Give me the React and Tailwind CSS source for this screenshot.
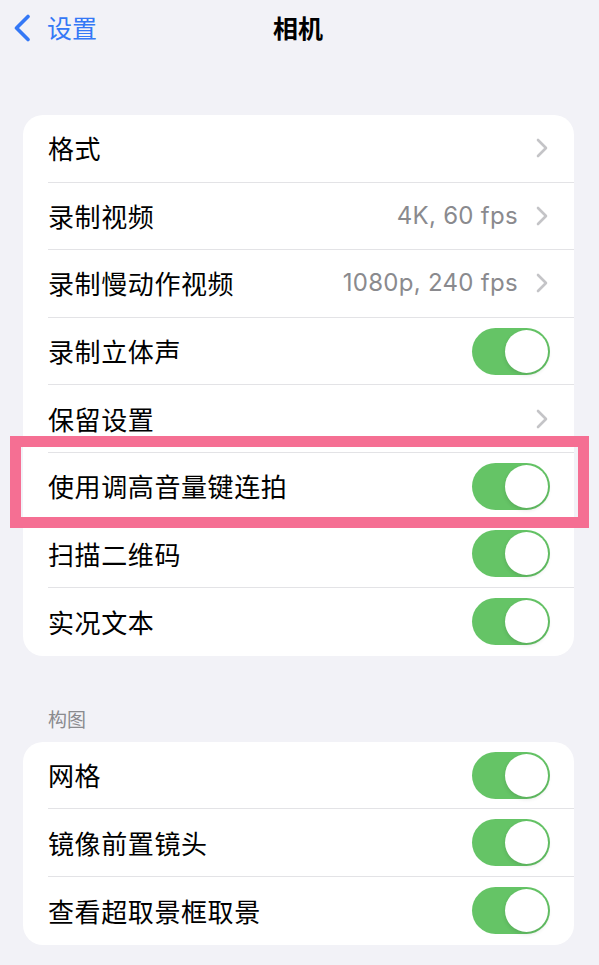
import React from 'react';

const font = {
  fontFamily: '"Noto Sans CJK SC", "Noto Sans", "Liberation Sans", sans-serif',
};

const latin = {
  fontFamily: 'Inter, "Liberation Sans", sans-serif',
};

function Chevron() {
  return (
    <svg width="12" height="20" viewBox="0 0 12 20" fill="none" className="shrink-0">
      <path d="M2 2l8 8-8 8" stroke="#c4c4c7" strokeWidth="2.6" strokeLinecap="round" strokeLinejoin="round" />
    </svg>
  );
}

function Toggle() {
  return (
    <div className="w-[78px] h-[47px] rounded-full bg-[#65c466] relative shrink-0">
      <div className="absolute right-[2px] top-[2px] w-[43px] h-[43px] rounded-full bg-white shadow-[0_2px_4px_rgba(0,0,0,0.12)]" />
    </div>
  );
}

function Row({ label, value, kind, last }) {
  return (
    <div className="h-[67.6px] pl-[25px] flex">
      <div
        className={
          'flex-1 flex items-center justify-between ' +
          (kind === 'toggle' ? 'pr-[24px] ' : 'pr-[26px] ') +
          (last ? '' : 'border-b border-[#e3e3e6]')
        }
      >
        <span className="text-[26px] text-black leading-none tracking-[0.6px]">{label}</span>
        {kind === 'toggle' ? (
          <Toggle />
        ) : (
          <div className="flex items-center gap-[18px]">
            {value && (
              <span className="text-[24px] text-[#8a8a8e] leading-none tracking-[0.3px]" style={latin}>
                {value}
              </span>
            )}
            <Chevron />
          </div>
        )}
      </div>
    </div>
  );
}

const mainRows = [
  { label: '格式', kind: 'link' },
  { label: '录制视频', value: '4K, 60 fps', kind: 'link' },
  { label: '录制慢动作视频', value: '1080p, 240 fps', kind: 'link' },
  { label: '录制立体声', kind: 'toggle' },
  { label: '保留设置', kind: 'link' },
  { label: '使用调高音量键连拍', kind: 'toggle' },
  { label: '扫描二维码', kind: 'toggle' },
  { label: '实况文本', kind: 'toggle' },
];

const compositionRows = [
  { label: '网格', kind: 'toggle' },
  { label: '镜像前置镜头', kind: 'toggle' },
  { label: '查看超取景框取景', kind: 'toggle' },
];

export default function App() {
  return (
    <div className="relative w-full min-h-[965px] bg-[#f2f2f7]" style={font}>
      {/* Navigation bar */}
      <div className="h-[55px] grid grid-cols-[1fr_auto_1fr] items-center">
        <div className="flex items-center pl-[13px] gap-[16px]">
          <svg width="18" height="28" viewBox="0 0 18 28" fill="none">
            <path d="M15 2.5L3.5 14 15 25.5" stroke="#3478f6" strokeWidth="3.6" strokeLinecap="round" strokeLinejoin="round" />
          </svg>
          <span className="text-[25px] text-[#3478f6] leading-none">设置</span>
        </div>
        <span className="text-[25px] font-bold text-black leading-none pr-[3px]">相机</span>
        <div />
      </div>

      <div className="pt-[60px]">
        <div className="ml-[23px] mr-[25px] rounded-[20px] bg-white overflow-hidden">
          {mainRows.map((r, i) => (
            <Row key={r.label} {...r} last={i === mainRows.length - 1} />
          ))}
        </div>

        <div className="pt-[50px] pb-[10px] pl-[48px] text-[19px] leading-[26px] text-[#8a8a8e]">构图</div>

        <div className="ml-[23px] mr-[25px] rounded-[20px] bg-white overflow-hidden">
          {compositionRows.map((r, i) => (
            <Row key={r.label} {...r} last={i === compositionRows.length - 1} />
          ))}
        </div>
      </div>

      {/* Highlight frame around the burst setting */}
      <div className="absolute left-[10px] top-[436px] w-[579px] h-[92px] border-[11px] border-[#f56f93] pointer-events-none" />
    </div>
  );
}
